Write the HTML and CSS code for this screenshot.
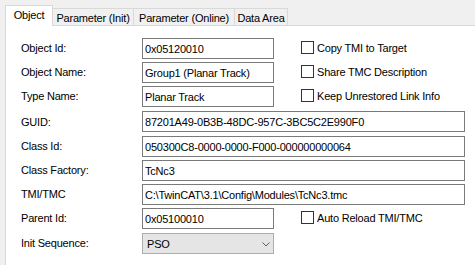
FILE: index.html
```
<!DOCTYPE html>
<html>
<head>
  <meta charset="utf-8">
  <title>Object</title>
<link rel="stylesheet" href="styles.css">
</head>
<body>
    <div class="tabs">
        <div class="tab active">Object</div>
        <div class="tab t-init">Parameter (Init)</div>
        <div class="tab t-online">Parameter (Online)</div>
        <div class="tab t-data">Data Area</div>
    </div>
    <div class="panel">
        <div class="form">
            <label>Object Id:</label>
            <input type="text" value="0x05120010" readonly>
            <div class="check"><input type="checkbox"><span>Copy TMI to Target</span></div>

            <label>Object Name:</label>
            <input type="text" value="Group1 (Planar Track)" readonly>
            <div class="check"><input type="checkbox"><span>Share TMC Description</span></div>

            <label>Type Name:</label>
            <input type="text" value="Planar Track" readonly>
            <div class="check"><input type="checkbox"><span>Keep Unrestored Link Info</span></div>

            <label class="gap">GUID:</label>
            <input type="text" class="wide gap" value="87201A49-0B3B-48DC-957C-3BC5C2E990F0" readonly>

            <label>Class Id:</label>
            <input type="text" class="wide" value="050300C8-0000-0000-F000-000000000064" readonly>

            <label>Class Factory:</label>
            <input type="text" class="wide" value="TcNc3" readonly>

            <label>TMI/TMC</label>
            <input type="text" class="wide" value="C:\TwinCAT\3.1\Config\Modules\TcNc3.tmc" readonly>

            <label>Parent Id:</label>
            <input type="text" value="0x05100010" readonly>
            <div class="check"><input type="checkbox"><span>Auto Reload TMI/TMC</span></div>

            <label class="gap1">Init Sequence:</label>
            <div class="combo gap1">
                <span>PSO</span>
                <svg width="8" height="5" viewBox="0 0 8 5"><polyline points="0.5,0.5 4,4 7.5,0.5" fill="none" stroke="#606060" stroke-width="1"/></svg>
            </div>
        </div>
    </div>
</body>
</html>
```

FILE: styles.css
```
*{font-family:"Liberation Sans",Arial,sans-serif;box-sizing:border-box}
body {
    margin: 0;
    padding: 0;
    background-color: #f0f0f0;
    font-size: 11px;
    letter-spacing: -0.2px;
    color: #000;
    height: 265px;
    overflow: hidden;
}
.tabs {
    display: flex;
    align-items: flex-end;
    height: 25px;
    padding-left: 5px;
}
.tab {
    height: 17px;
    line-height: 13px;
    padding-top: 3px;
    text-align: center;
    background-color: #f0f0f0;
    border-top: 1px solid #d9d9d9;
    border-right: 1px solid #d9d9d9;
    white-space: nowrap;
}
.tab.active {
    width: 48px;
    height: 21px;
    margin-bottom: -1px;
    background-color: white;
    border: 1px solid #d9d9d9;
    border-bottom: none;
    position: relative;
    z-index: 2;
}
.t-init { width: 81px; }
.t-online { width: 101px; }
.t-data { width: 53px; }
.panel {
    background-color: white;
    margin-left: 5px;
    border-left: 1px solid #d9d9d9;
    border-top: 1px solid #d9d9d9;
    height: 240px;
}
.form {
    display: grid;
    grid-template-columns: 121px 132px auto;
    row-gap: 3px;
    padding: 12px 0 0 15px;
    align-items: center;
}
.form label {
    line-height: 21px;
    white-space: nowrap;
}
.form input[type=text] {
    height: 21px;
    width: 132px;
    border: 1px solid #7a7a7a;
    padding: 0 2px;
    font-size: 11px;
    letter-spacing: -0.2px;
    color: #000;
    outline: none;
    margin: 0;
}
.form input.wide {
    grid-column: span 2;
    width: 323px;
}
.gap { margin-top: 2px; }
.gap1 { margin-top: 1px; }
.check {
    display: flex;
    align-items: center;
    margin-left: 27px;
    margin-top: -2px;
    white-space: nowrap;
}
.check input {
    appearance: none;
    -webkit-appearance: none;
    width: 13px;
    height: 13px;
    margin: 0 3px 0 0;
    border: 1px solid #333333;
    background-color: white;
    border-radius: 0;
}
.combo {
    display: flex;
    align-items: center;
    justify-content: space-between;
    width: 132px;
    height: 21px;
    padding: 0 3px 0 4px;
    background-color: #e5e5e5;
    border: 1px solid #adadad;
}
.combo svg {
    margin-top: 1px;
}
```
